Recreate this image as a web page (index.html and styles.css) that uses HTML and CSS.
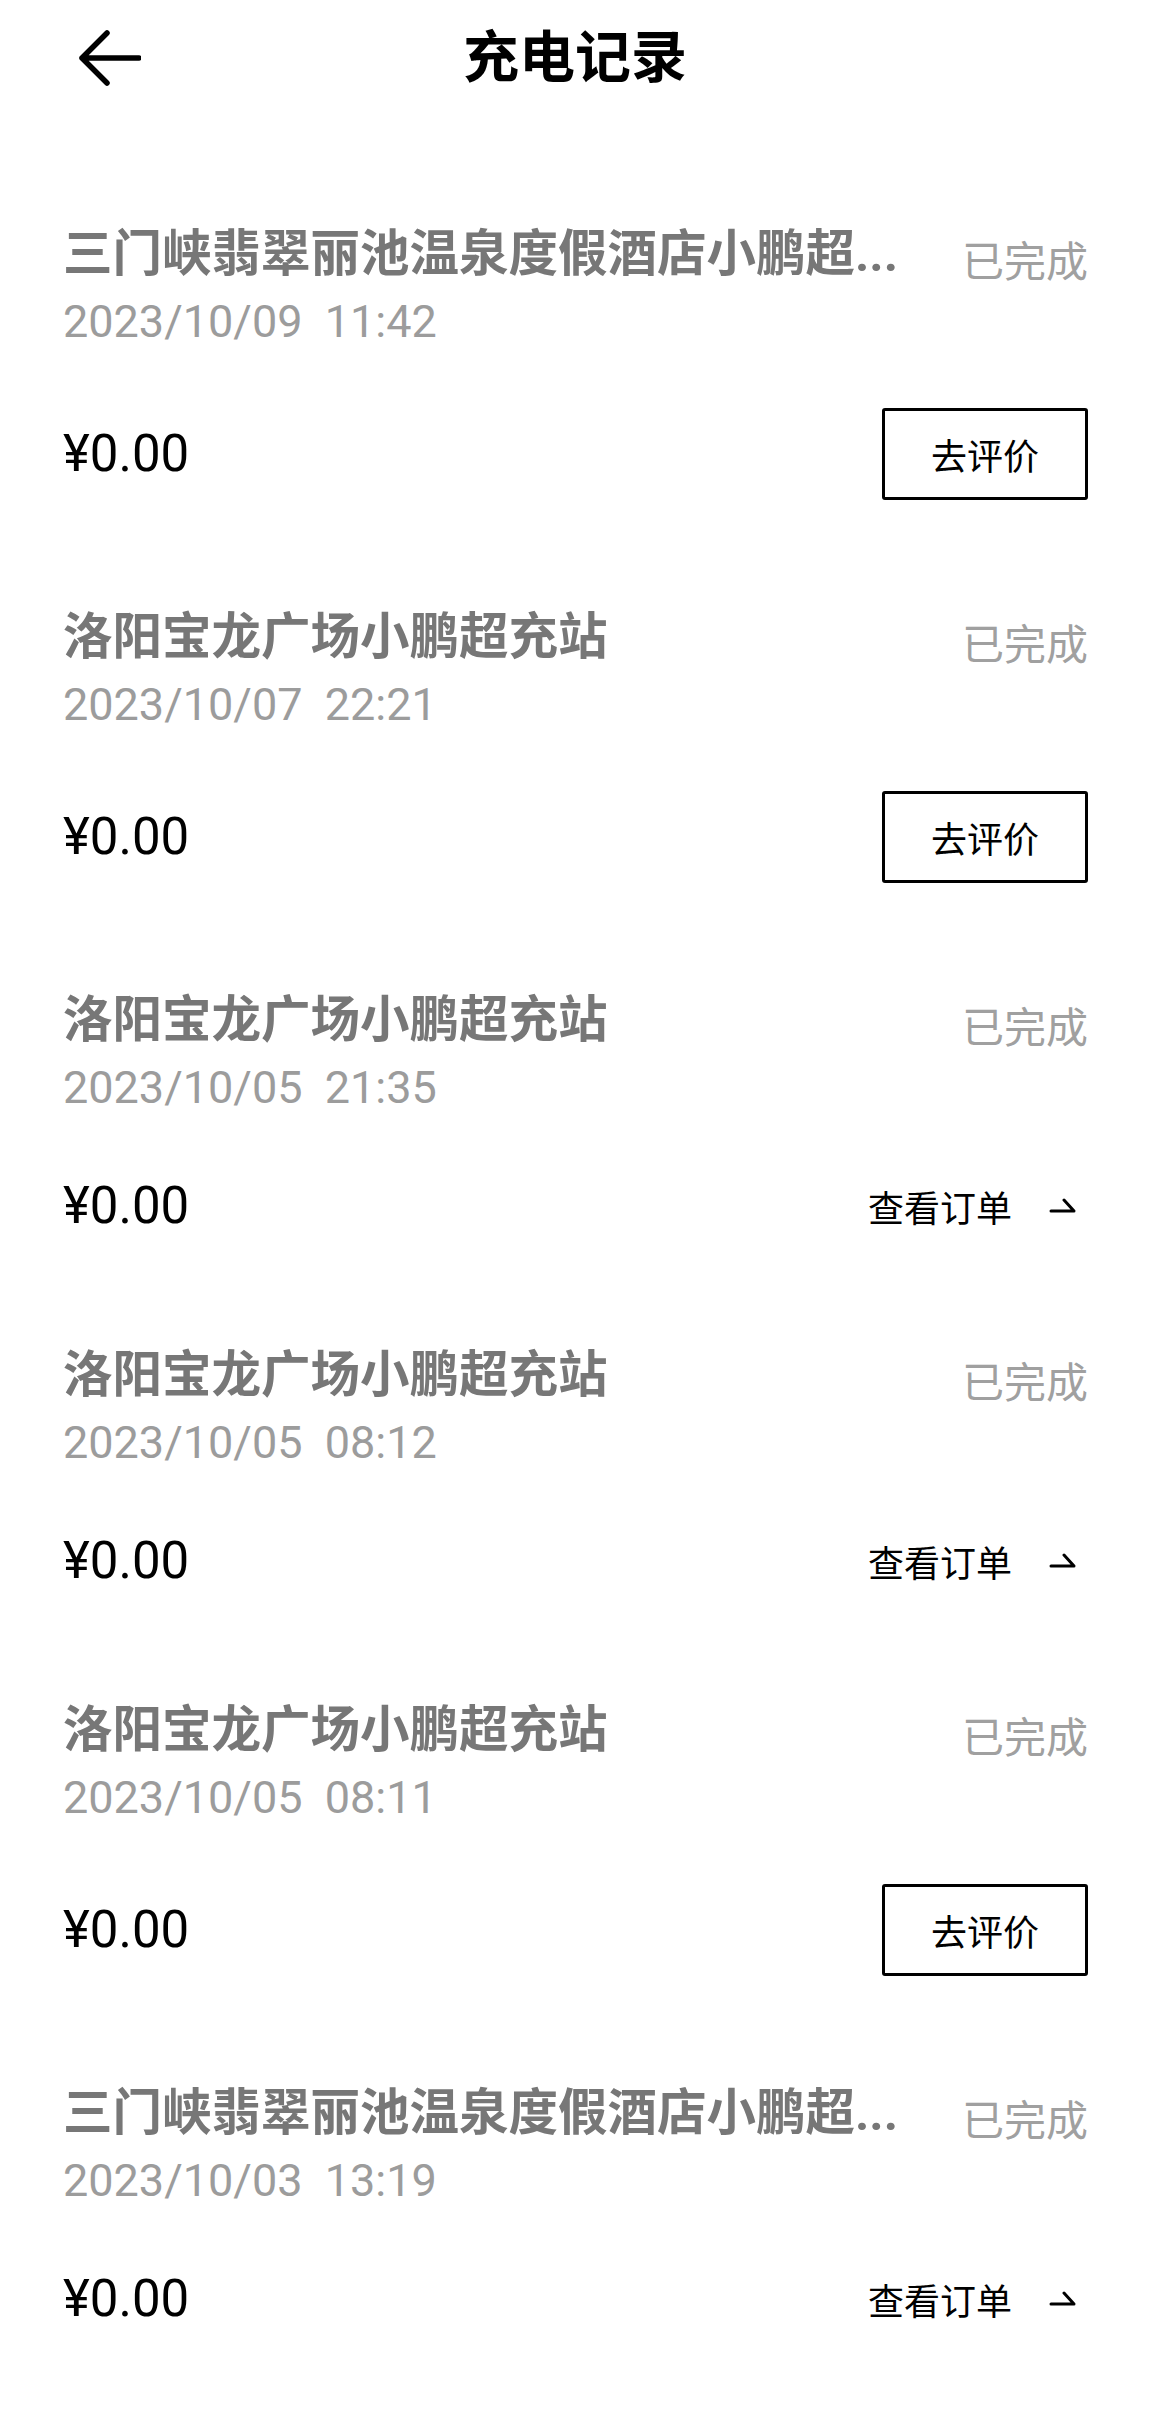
FILE: index.html
```html
<!DOCTYPE html>
<html lang="zh-CN">
<head>
    <meta charset="UTF-8">
    <meta name="viewport" content="width=device-width, initial-scale=1.0">
    <title>充电记录</title>
    <link rel="stylesheet" href="styles.css">
</head>
<body>
    <header class="top-bar">
        <div class="back">
            <svg width="64" height="56" viewBox="0 0 64 56">
                <path d="M5 28 H62 M30 3 L5 28 L30 53" fill="none" stroke="#000" stroke-width="5.5" stroke-linecap="round" stroke-linejoin="round"/>
            </svg>
        </div>
        <h1 class="page-title">充电记录</h1>
        <div></div>
    </header>

    <div class="record-list">
        <div class="record">
            <div class="record-head">
                <div class="station">三门峡翡翠丽池温泉度假酒店小鹏超...</div>
                <div class="status">已完成</div>
            </div>
            <div class="time">2023/10/09  11:42</div>
            <div class="record-foot">
                <div class="price">¥0.00</div>
                <button class="rate-btn">去评价</button>
            </div>
        </div>

        <div class="record">
            <div class="record-head">
                <div class="station">洛阳宝龙广场小鹏超充站</div>
                <div class="status">已完成</div>
            </div>
            <div class="time">2023/10/07  22:21</div>
            <div class="record-foot">
                <div class="price">¥0.00</div>
                <button class="rate-btn">去评价</button>
            </div>
        </div>

        <div class="record">
            <div class="record-head">
                <div class="station">洛阳宝龙广场小鹏超充站</div>
                <div class="status">已完成</div>
            </div>
            <div class="time">2023/10/05  21:35</div>
            <div class="record-foot">
                <div class="price">¥0.00</div>
                <a class="order-link">查看订单
                    <svg width="28" height="16" viewBox="0 0 28 16">
                        <path d="M2 13 H25 L15 2" fill="none" stroke="#000" stroke-width="3" stroke-linecap="round" stroke-linejoin="round"/>
                    </svg>
                </a>
            </div>
        </div>

        <div class="record">
            <div class="record-head">
                <div class="station">洛阳宝龙广场小鹏超充站</div>
                <div class="status">已完成</div>
            </div>
            <div class="time">2023/10/05  08:12</div>
            <div class="record-foot">
                <div class="price">¥0.00</div>
                <a class="order-link">查看订单
                    <svg width="28" height="16" viewBox="0 0 28 16">
                        <path d="M2 13 H25 L15 2" fill="none" stroke="#000" stroke-width="3" stroke-linecap="round" stroke-linejoin="round"/>
                    </svg>
                </a>
            </div>
        </div>

        <div class="record">
            <div class="record-head">
                <div class="station">洛阳宝龙广场小鹏超充站</div>
                <div class="status">已完成</div>
            </div>
            <div class="time">2023/10/05  08:11</div>
            <div class="record-foot">
                <div class="price">¥0.00</div>
                <button class="rate-btn">去评价</button>
            </div>
        </div>

        <div class="record">
            <div class="record-head">
                <div class="station">三门峡翡翠丽池温泉度假酒店小鹏超...</div>
                <div class="status">已完成</div>
            </div>
            <div class="time">2023/10/03  13:19</div>
            <div class="record-foot">
                <div class="price">¥0.00</div>
                <a class="order-link">查看订单
                    <svg width="28" height="16" viewBox="0 0 28 16">
                        <path d="M2 13 H25 L15 2" fill="none" stroke="#000" stroke-width="3" stroke-linecap="round" stroke-linejoin="round"/>
                    </svg>
                </a>
            </div>
        </div>
    </div>
</body>
</html>
```

FILE: styles.css
```css
body {
    font-family: Roboto, "Noto Sans CJK SC", sans-serif;
    background-color: #fff;
    color: #000;
    margin: 0;
}

.top-bar {
    display: grid;
    grid-template-columns: 1fr auto 1fr;
    align-items: center;
    height: 116px;
}

.back {
    display: flex;
    padding-left: 77px;
}

.page-title {
    margin: 0;
    font-size: 56px;
    font-weight: 700;
    line-height: 64px;
}

.record-list {
    display: flex;
    flex-direction: column;
    gap: 105px;
    padding: 106px 62px 0 63px;
}

.record-head {
    display: flex;
    justify-content: space-between;
    align-items: center;
    height: 64px;
}

.station {
    font-size: 49.5px;
    font-weight: 700;
    color: #777;
    line-height: 64px;
    white-space: nowrap;
}

.status {
    font-size: 42px;
    color: #a0a0a0;
    padding-top: 9px;
}

.time {
    margin-top: 8px;
    font-size: 45px;
    line-height: 56px;
    color: #9c9c9c;
    white-space: pre;
}

.record-foot {
    display: flex;
    justify-content: space-between;
    align-items: center;
    min-height: 64px;
    margin-top: 58px;
}

.price {
    font-size: 51px;
    line-height: 64px;
}

.rate-btn {
    width: 206px;
    height: 92px;
    border: 3px solid #000;
    border-radius: 3px;
    background: #fff;
    color: #000;
    font-family: inherit;
    font-size: 36px;
    padding: 0;
}

.order-link {
    display: flex;
    align-items: center;
    gap: 37px;
    padding-right: 11px;
    font-size: 36px;
    color: #000;
}
```
